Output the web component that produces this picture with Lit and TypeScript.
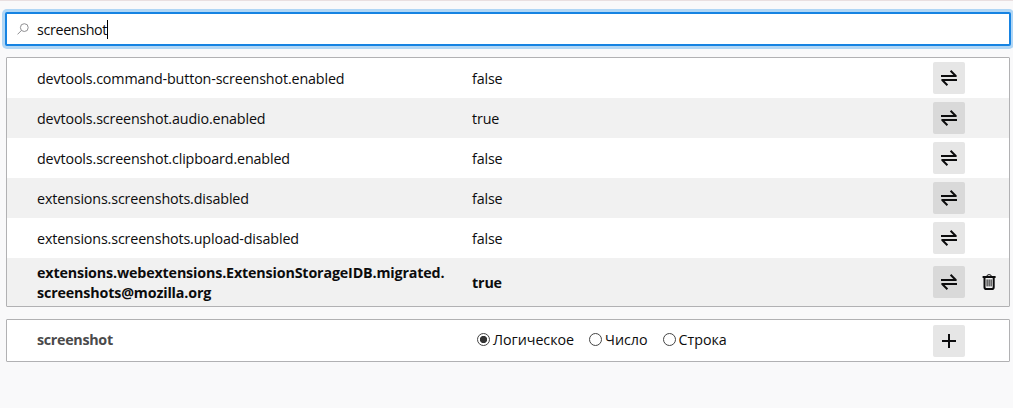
import { LitElement, css, html, svg } from 'lit';
import { customElement, property } from 'lit/decorators.js';
import { classMap } from 'lit/directives/class-map.js';

interface Pref {
  name: string[]; // parts between the allowed line breaks
  value: string;
  modified?: boolean;
}

const PREFS: Pref[] = [
  { name: ['devtools.command-button-screenshot.enabled'], value: 'false' },
  { name: ['devtools.screenshot.audio.enabled'], value: 'true' },
  { name: ['devtools.screenshot.clipboard.enabled'], value: 'false' },
  { name: ['extensions.screenshots.disabled'], value: 'false' },
  { name: ['extensions.screenshots.upload-disabled'], value: 'false' },
  {
    name: ['extensions.webextensions.ExtensionStorageIDB.migrated.', 'screenshots@mozilla.org'],
    value: 'true',
    modified: true,
  },
];

const TYPES = ['Логическое', 'Число', 'Строка'];

const ICONS = {
  toggle: svg`<path d="M0 6h15.6M9.6 0.8l5.2 5.2M0.4 10h15.6M6.4 15.2L1.2 10" />`,
  add: svg`<path d="M8 1v14M1 8h14" />`,
  trash: svg`
    <path d="M1.6 3h13M3.5 3v10.2q0 1.8 1.8 1.8h5.6q1.8 0 1.8-1.8V3" />
    <path class="thin" d="M5.8 2.4q0-1.8 2.3-1.8t2.3 1.8M6.1 5.4v7M8.1 5.4v7M10.1 5.4v7" />
  `,
};

@customElement('icon-button')
export class IconButton extends LitElement {
  @property() icon: keyof typeof ICONS = 'toggle';
  @property({ type: Boolean, reflect: true }) ghost = false;

  static styles = css`
    :host {
      display: block;
      width: 32px;
      height: 32px;
    }
    button {
      display: flex;
      align-items: center;
      justify-content: center;
      width: 32px;
      height: 32px;
      padding: 0;
      border: none;
      border-radius: 2px;
      background: rgba(12, 12, 13, 0.1);
    }
    :host([ghost]) button {
      background: none;
    }
    svg {
      width: 16px;
      height: 16px;
      fill: none;
      stroke: #0c0c0d;
      stroke-width: 2;
    }
    .thin {
      stroke-width: 1;
    }
  `;

  render() {
    return html`<button><svg viewBox="0 0 16 16">${ICONS[this.icon]}</svg></button>`;
  }
}

@customElement('app-root')
export class AppRoot extends LitElement {
  static styles = css`
    :host {
      display: block;
      box-sizing: border-box;
      height: 408px;
      padding: 11px 2px 0 5px;
      overflow: hidden;
      border-top: 1px solid #e9dfe0;
      background: #f9f9fa;
      color: #0c0c0d;
      font: 14.3px/20px 'Open Sans', 'Noto Sans', sans-serif;
      letter-spacing: -0.14px;
    }

    /* search field, shown focused */
    .search {
      display: flex;
      align-items: center;
      box-sizing: border-box;
      height: 34px;
      padding-left: 10px;
      border: 2px solid #1683e2;
      border-radius: 2px;
      box-shadow: 0 0 0 3px #b0d6f5;
      background: #fff;
      letter-spacing: -0.35px;
    }
    .search svg {
      width: 12px;
      height: 12px;
      margin-right: 8px;
      fill: none;
      stroke: #8f8f92;
    }
    .search-text {
      padding-top: 2px;
    }
    .caret {
      width: 1px;
      height: 19px;
      background: #000;
    }

    .box {
      margin: 11px 1px 0;
      border: 1px solid #b1b1b3;
      border-radius: 1px;
      background: #fff;
    }
    .box.new {
      margin-top: 12px;
    }
    .row {
      display: grid;
      grid-template-columns: 435px 461px 32px 1fr;
      align-items: center;
      height: 40px;
      padding: 0 3px 0 30px;
    }
    .row:nth-child(even) {
      background: #f1f1f1;
    }
    .row icon-button[ghost] {
      margin-left: 8px;
    }
    .text {
      padding-top: 2px;
    }
    .modified {
      height: 48px;
      font-weight: 700;
      letter-spacing: -0.16px;
    }
    .new .row {
      height: 41px;
    }
    .new-name {
      padding-bottom: 1px;
      color: #4a4a4b;
      font-weight: 700;
      letter-spacing: -0.3px;
    }

    .types {
      display: flex;
      gap: 15px;
      padding: 0 0 1px 5px;
      letter-spacing: -0.04px;
    }
    label {
      display: flex;
      align-items: center;
      gap: 3px;
    }
    .radio {
      box-sizing: border-box;
      width: 13px;
      height: 13px;
      margin-top: -2px;
      border: 1px solid #444;
      border-radius: 50%;
      background: #fff;
    }
    .radio.checked {
      background: radial-gradient(circle, #333 3.3px, #fff 4px);
    }
  `;

  private renderPref(pref: Pref) {
    return html`
      <div class=${classMap({ row: true, modified: !!pref.modified })}>
        <div class="text">${pref.name.map((part) => html`<div>${part}</div>`)}</div>
        <div class="text">${pref.value}</div>
        <icon-button icon="toggle"></icon-button>
        ${pref.modified ? html`<icon-button icon="trash" ghost></icon-button>` : ''}
      </div>
    `;
  }

  render() {
    return html`
      <div class="search">
        <svg viewBox="0 0 12 12">
          <circle cx="7.3" cy="4.6" r="3.9" />
          <path d="M4.5 7.4L0.5 11.4" />
        </svg>
        <span class="search-text">screenshot</span>
        <span class="caret"></span>
      </div>
      <div class="box">${PREFS.map((pref) => this.renderPref(pref))}</div>
      <div class="box new">
        <div class="row">
          <div class="new-name">screenshot</div>
          <div class="types">
            ${TYPES.map(
              (type, i) => html`
                <label>
                  <span class=${classMap({ radio: true, checked: i === 0 })}></span>
                  <span>${type}</span>
                </label>
              `
            )}
          </div>
          <icon-button icon="add"></icon-button>
        </div>
      </div>
    `;
  }
}
